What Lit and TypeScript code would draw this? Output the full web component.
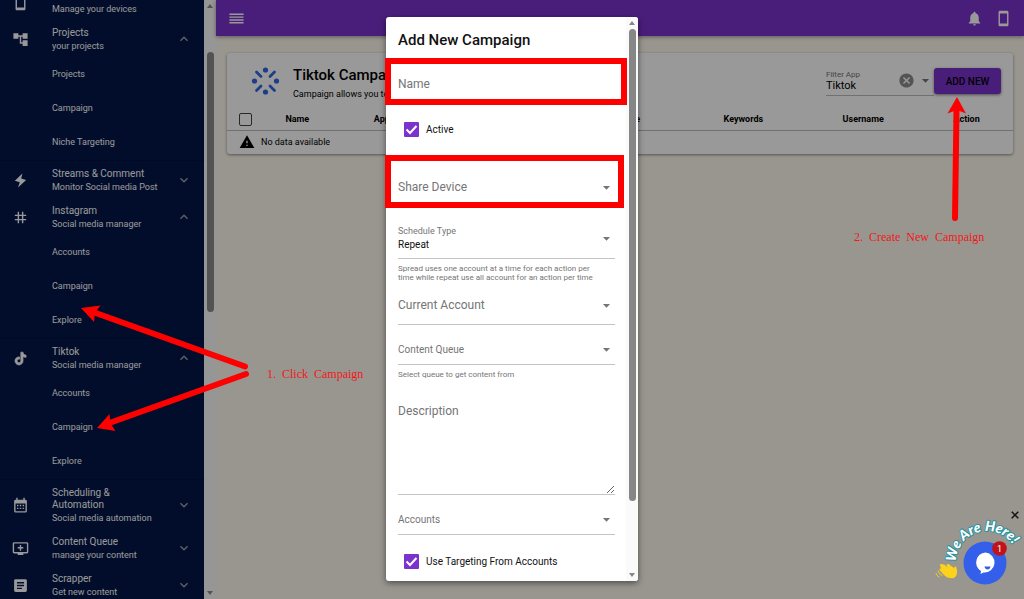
import { LitElement, html, css, svg, nothing } from "lit";
import { customElement, property } from "lit/decorators.js";

const ICONS: Record<string, unknown> = {
  phone: svg`<path d="M17 1.01 7 1c-1.100 0-2 .9-2 2v18c0 1.100.9 2 2 2h10c1.100 0 2-.9 2-2V3c0-1.100-.9-1.990-2-1.990zM17 19H7V5h10v14z"/>`,
  tree: svg`<path d="M22 11V3h-7v3H9V3H2v8h7V8h2v10h4v3h7v-8h-7v3h-2V8h2v3z"/>`,
  bolt: svg`<path d="M14.700 2 4 12.500l7 2L8.500 22 20 11.300l-7-2z"/>`,
  tag: svg`<path d="M20 10V8h-4V4h-2v4h-4V4H8v4H4v2h4v4H4v2h4v4h2v-4h4v4h2v-4h4v-2h-4v-4h4zm-6 4h-4v-4h4v4z"/>`,
  tiktok: svg`<path d="M16.600 5.820A4.280 4.280 0 0 1 15.540 3h-3.090v12.400a2.590 2.590 0 1 1-1.860-2.480V9.770A5.670 5.670 0 1 0 15.540 15.400V9.010a7.300 7.300 0 0 0 4.300 1.380V7.300a4.300 4.300 0 0 1-3.240-1.480z" stroke="currentColor"/>`,
  calendar: svg`<path fill-rule="evenodd" d="M6 1h2v3h8V1h2v3h1a2 2 0 0 1 2 2v14a2 2 0 0 1-2 2H5a2 2 0 0 1-2-2V6a2 2 0 0 1 2-2h1zM5 9v11h14V9zM7 11h2v2H7zm4 0h2v2h-2zm4 0h2v2h-2zm-8 4h2v2H7zm4 0h2v2h-2zm4 0h2v2h-2z"/>`,
  queue: svg`<path d="M21 3H3c-1.110 0-2 .89-2 2v12c0 1.100.89 2 2 2h5v2h8v-2h5c1.100 0 2-.9 2-2V5c0-1.110-.9-2-2-2zm0 14H3V5h18v12zm-5-7v2h-3v3h-2v-3H8v-2h3V7h2v3h3z"/>`,
  article: svg`<path d="M19 3H5c-1.100 0-2 .9-2 2v14c0 1.100.9 2 2 2h14c1.100 0 2-.9 2-2V5c0-1.100-.9-2-2-2zm-5 14H7v-2h7v2zm3-4H7v-2h10v2zm0-4H7V7h10v2z"/>`,
  up: svg`<path d="M12 8l-6 6 1.410 1.410L12 10.830l4.590 4.580L18 14z"/>`,
  down: svg`<path d="M16.590 8.590 12 13.170 7.410 8.590 6 10l6 6 6-6z"/>`,
  menu: svg`<path d="M2 19h20v-2H2v2zm0-4h20v-2H2v2zm0-4h20V9H2v2zm0-6v2h20V5H2z"/>`,
  bell: svg`<path d="M12 22c1.100 0 2-.9 2-2h-4c0 1.100.89 2 2 2zm6-6v-5c0-3.070-1.640-5.640-4.500-6.320V4c0-.83-.67-1.500-1.500-1.500s-1.500.67-1.500 1.500v.68C7.630 5.360 6 7.920 6 11v5l-2 2v1h16v-1l-2-2z"/>`,
  warning: svg`<path d="M1 21h22L12 2 1 21zm12-3h-2v-2h2v2zm0-4h-2v-4h2v4z"/>`,
  cancel: svg`<path d="M12 2C6.470 2 2 6.470 2 12s4.470 10 10 10 10-4.470 10-10S17.530 2 12 2zm5 13.590L15.590 17 12 13.410 8.410 17 7 15.590 10.590 12 7 8.410 8.410 7 12 10.590 15.590 7 17 8.410 13.410 12 17 15.590z"/>`,
  caret: svg`<path d="M7 10l5 5 5-5z"/>`,
  close: svg`<path d="M19 6.410 17.590 5 12 10.590 6.410 5 5 6.410 10.590 12 5 17.590 6.410 19 12 13.410 17.590 19 19 17.590 13.410 12z" stroke="currentColor"/>`,
};

const icon = (name: string, size: number) =>
  html`<svg class="icon" width=${size} height=${size} viewBox="0 0 24 24" aria-hidden="true">${ICONS[name]}</svg>`;

const shared = css`
  * { box-sizing: border-box; }
  .icon { display: block; flex: none; fill: currentColor; }
  button { font: inherit; color: inherit; background: none; border: 0; padding: 0; cursor: pointer; }
`;

@customElement("scroll-track")
class ScrollTrack extends LitElement {
  static styles = css`
    :host { display: flex; flex-direction: column; align-items: center; width: 12px; flex: none; background: var(--track); color: var(--thumb); padding: 4px 0; }
    .rail { flex: 1; width: 7px; display: flex; flex-direction: column; margin: 4px 0 2px; }
    .thumb { background: currentColor; border-radius: 4px; }
    svg { display: block; fill: currentColor; flex: none; }
  `;
  @property({ type: Number }) start = 0;
  @property({ type: Number }) size = 50;
  render() {
    return html`
      <svg width="6" height="4" viewBox="0 0 6 4"><path d="M0 4 3 0l3 4z"/></svg>
      <div class="rail">
        <div style="height:${this.start}%"></div>
        <div class="thumb" style="height:${this.size}%"></div>
      </div>
      <svg width="6" height="4" viewBox="0 0 6 4"><path d="M0 0h6L3 4z"/></svg>`;
  }
}

interface Group { icon: string; title: string; sub: string; items?: string[]; leaf?: boolean; }

const GROUPS: Group[] = [
  { icon: "phone", title: "", sub: "Manage your devices", leaf: true },
  { icon: "tree", title: "Projects", sub: "your projects", items: ["Projects", "Campaign", "Niche Targeting"] },
  { icon: "bolt", title: "Streams & Comment", sub: "Monitor Social media Post" },
  { icon: "tag", title: "Instagram", sub: "Social media manager", items: ["Accounts", "Campaign", "Explore"] },
  { icon: "tiktok", title: "Tiktok", sub: "Social media manager", items: ["Accounts", "Campaign", "Explore"] },
  { icon: "calendar", title: "Scheduling & Automation", sub: "Social media automation" },
  { icon: "queue", title: "Content Queue", sub: "manage your content" },
  { icon: "article", title: "Scrapper", sub: "Get new content" },
];

@customElement("side-menu")
class SideMenu extends LitElement {
  static styles = [shared, css`
    :host { display: flex; width: 216px; flex: none; overflow: hidden; --track: #fafafa; --thumb: #8b8b8b; }
    nav { flex: 1; min-width: 0; overflow: hidden; background: #021648; color: #fff; }
    .list { margin-top: -17px; }
    .group { display: grid; grid-template-columns: 40px 1fr 16px; column-gap: 12px; align-items: center; width: 100%; min-height: 37px; padding: 7px 12px 6px 0; text-align: left; }
    .lead { display: flex; justify-content: center; }
    .text { display: grid; row-gap: 2px; }
    .title { font-size: 10px; line-height: 12px; min-height: 12px; padding-right: 16px; }
    .sub { font-size: 9px; line-height: 10px; white-space: nowrap; }
    .section { border-bottom: 1px solid #02123c; padding-bottom: 1px; }
    .section a { display: flex; align-items: center; height: 34px; padding-left: 52px; font-size: 9px; color: inherit; text-decoration: none; }
    .chev { opacity: 0.6; }
  `];
  render() {
    return html`<nav aria-label="Main"><div class="list">
      ${GROUPS.map((g) => html`
        <button class="group" aria-expanded=${g.items ? "true" : "false"}>
          <span class="lead">${icon(g.icon, 17)}</span>
          <span class="text"><span class="title">${g.title}</span><span class="sub">${g.sub}</span></span>
          ${g.leaf ? nothing : html`<span class="chev">${icon(g.items ? "up" : "down", 16)}</span>`}
        </button>
        ${g.items ? html`<div class="section">${g.items.map((i) => html`<a href="#">${i}</a>`)}</div>` : nothing}`)}
    </div></nav>
    <scroll-track .start=${7} .size=${45}></scroll-track>`;
  }
}

const COLUMNS = [
  { name: "Name", width: 8.7 }, { name: "App", width: 12.8 }, { name: "", width: 18.8 }, { name: "Type", width: 12.8 },
  { name: "Keywords", width: 16 }, { name: "Username", width: 14.5 }, { name: "Action", width: 11.8 },
];

@customElement("campaign-page")
class CampaignPage extends LitElement {
  static styles = [shared, css`
    :host { flex: 1; min-width: 0; display: flex; flex-direction: column; background: #fffaf0; color: #000; }
    .bar { display: flex; align-items: center; gap: 12px; height: 36px; padding: 0 12px; background: #7b33cd; color: #fff; box-shadow: 0 1px 4px rgba(0,0,0,.4); }
    .spacer { flex: 1; }
    .card { margin: 17px 11px; background: #fff; border-radius: 3px; box-shadow: 0 1px 3px rgba(0,0,0,.45); }
    .head { display: flex; align-items: center; height: 56px; padding: 0 12px 0 24px; }
    .titles { margin-left: 13px; padding-top: 4px; flex: 1; min-width: 0; display: grid; row-gap: 4px; white-space: nowrap; overflow: hidden; }
    h1 { margin: 0; font-size: 15px; line-height: 18px; font-weight: 500; }
    p { margin: 0; font-size: 9px; line-height: 12px; }
    .filter { display: flex; align-items: center; gap: 2px; width: 108px; height: 30px; border-bottom: 1px solid #bbb; color: #757575; }
    .filter button { color: #8c8c8c; }
    .pair { flex: 1; display: grid; row-gap: 1px; }
    label { font-size: 8px; line-height: 9px; }
    .pair select { appearance: none; border: 0; background: none; padding: 0; font: inherit; font-size: 11px; line-height: 12px; height: 12px; color: #000; }
    .add { height: 26px; width: 67px; border-radius: 3px; background: #7b33cd; color: #000; font-size: 10px; font-weight: 500; box-shadow: 0 1px 3px rgba(0,0,0,.5); }
    table { width: 100%; table-layout: fixed; border-collapse: collapse; font-size: 9px; }
    th { height: 21px; padding: 0; font-weight: 700; text-align: center; border-bottom: 1px solid #bbb; }
    th:first-child { text-align: left; padding-left: 12px; }
    th input { display: block; appearance: none; width: 13px; height: 13px; margin: 0; border: 1px solid #444; border-radius: 2px; }
    td { height: 24px; padding: 0 0 0 12px; }
    .empty { display: flex; align-items: center; gap: 6px; }
  `];
  render() {
    return html`
      <header class="bar">
        <button aria-label="Menu">${icon("menu", 17)}</button><span class="spacer"></span>
        <button aria-label="Notifications">${icon("bell", 17)}</button>
        <button aria-label="Devices">${icon("phone", 17)}</button>
      </header>
      <section class="card">
        <div class="head">
          <svg width="29" height="28" viewBox="0 0 29 28" fill="#3166e8" stroke="#3166e8" stroke-linecap="round">
            <g stroke="none"><circle cx="14.500" cy="3" r="2.600"/><circle cx="14.500" cy="25" r="2.600"/><circle cx="3.500" cy="14" r="2.600"/><circle cx="25.500" cy="14" r="2.600"/></g>
            <path stroke-width="2.800" d="M5.500 5l4.500 4.500M23.500 5l-4.500 4.500M5.500 23.500l4.500-4.500M23.500 23.500l-4.500-4.500"/>
          </svg>
          <div class="titles"><h1>Tiktok Campaign</h1><p>Campaign allows you to</p></div>
          <div class="filter">
            <div class="pair"><label for="app">Filter App</label><select id="app"><option>Tiktok</option></select></div>
            <button aria-label="Clear filter">${icon("cancel", 17)}</button>${icon("caret", 17)}
          </div>
          <button class="add">ADD NEW</button>
        </div>
        <table>
          <colgroup><col style="width:4.6%">${COLUMNS.map((c) => html`<col style="width:${c.width}%">`)}</colgroup>
          <thead><tr><th><input type="checkbox" aria-label="Select all"></th>${COLUMNS.map((c) => html`<th>${c.name}</th>`)}</tr></thead>
          <tbody><tr><td colspan="8"><div class="empty">${icon("warning", 16)}<span>No data available</span></div></td></tr></tbody>
        </table>
      </section>`;
  }
}

@customElement("campaign-dialog")
class CampaignDialog extends LitElement {
  static styles = [shared, css`
    :host { display: flex; width: 252px; max-height: 100%; overflow: hidden; border-radius: 3px; background: #fff; color: #111; box-shadow: 0 2px 6px rgba(0,0,0,.5); --track: #fafafa; --thumb: #868686; }
    form { flex: 1; min-width: 0; overflow: hidden; padding: 0 11px 0 12px; }
    h2 { margin: 0; padding: 14px 0 10px; font-size: 15px; line-height: 18px; font-weight: 500; }
    .field { display: grid; align-items: center; height: 46px; border-bottom: 1px solid #c4c4c4; color: #757575; font-size: 10px; }
    .field > * { grid-area: 1 / 1; min-width: 0; }
    .field > .icon { justify-self: end; pointer-events: none; }
    .field input, .field select, textarea { appearance: none; width: 100%; height: 100%; border: 0; outline: 0; padding: 0; background: none; font: inherit; color: #111; }
    .large { font-size: 12px; }
    .name { padding-top: 4px; }
    .share { height: 51px; padding-top: 16px; }
    .schedule { height: 39px; margin-top: 15px; padding-bottom: 2px; }
    .schedule label { align-self: start; font-size: 9px; line-height: 12px; padding-top: 5px; }
    .schedule select { align-self: end; height: 12px; line-height: 12px; margin-bottom: 5px; }
    .current { height: 39px; margin-top: 4px; }
    .queue, .accounts { height: 30px; margin-top: 10px; }
    .hint { margin: 5px 0 0; font-size: 8px; line-height: 9px; color: #757575; }
    .check { display: flex; align-items: center; gap: 7px; height: 49px; padding-left: 6px; font-size: 10px; }
    .check.last { height: 52px; }
    .check input { appearance: none; width: 15px; height: 15px; margin: 0; border-radius: 1px; background: #7b33cd; }
    .tick { display: grid; }
    .tick > * { grid-area: 1 / 1; }
    .tick svg { pointer-events: none; fill: none; stroke: #fff; stroke-width: 2; }
    .area { height: 91px; margin-top: 25px; align-items: start; }
    .area label { line-height: 14px; }
    textarea { resize: vertical; }
  `];
  private check(id: string, text: string, cls = "") {
    return html`<div class="check ${cls}"><span class="tick"><input type="checkbox" id=${id} checked>
      <svg width="15" height="15" viewBox="0 0 15 15"><path d="M2.500 7.500l3.500 3.500 6.500-7"/></svg></span><label for=${id}>${text}</label></div>`;
  }
  private pick(id: string, text: string, cls: string, value = "") {
    return html`<div class="field ${cls}"><label for=${id}>${text}</label>
      <select id=${id}><option>${value}</option></select>${icon("caret", 17)}</div>`;
  }
  render() {
    return html`<form aria-label="Add New Campaign">
      <h2>Add New Campaign</h2>
      <div class="field large name"><label for="name">Name</label><input id="name"></div>
      ${this.check("active", "Active")}
      ${this.pick("share", "Share Device", "large share")}
      ${this.pick("schedule", "Schedule Type", "schedule", "Repeat")}
      <p class="hint">Spread uses one account at a time for each action per<br>time while repeat use all account for an action per time</p>
      ${this.pick("current", "Current Account", "large current")}
      ${this.pick("queue", "Content Queue", "queue")}
      <p class="hint">Select queue to get content from</p>
      <div class="field large area"><label for="desc">Description</label><textarea id="desc"></textarea></div>
      ${this.pick("accounts", "Accounts", "accounts")}
      ${this.check("targeting", "Use Targeting From Accounts", "last")}
    </form>
    <scroll-track .start=${0} .size=${87}></scroll-track>`;
  }
}

@customElement("chat-bubble")
class ChatBubble extends LitElement {
  static styles = [shared, css`
    :host { position: absolute; right: 0; bottom: 0; width: 100px; height: 99px; }
    svg { display: block; overflow: visible; }
    .call { font: italic 900 14px Lato, sans-serif; fill: #fff; stroke: #25929f; stroke-width: 2px; paint-order: stroke; stroke-linejoin: round; }
    .count { font-size: 9px; fill: #fff; text-anchor: middle; }
    .close { position: absolute; right: 3px; top: 9px; color: #111; }
  `];
  render() {
    return html`<button class="close" aria-label="Close">${icon("close", 12)}</button>
      <svg width="100" height="99" viewBox="0 0 100 99">
        <path id="arc" fill="none" d="M32 62A31 31 0 0 1 94 62"/>
        <text class="call"><textPath href="#arc">We Are Here!</textPath></text>
        <circle cx="61" cy="63" r="21.500" fill="#335fea"/>
        <path fill="#fff" d="M61.500 52.500a10 10 0 1 1-2 20l-3 1.500.5-3a10 10 0 0 1 4.500-18.500z"/>
        <path fill="#335fea" d="M60.500 66.500h6q-.5 3-3 3t-3-3z"/>
        <circle cx="75.500" cy="48.500" r="7.300" fill="#c01218"/>
        <text class="count" x="75.500" y="51.500">1</text>
        <path fill="#fcd21c" d="M16.500 66.500q-1.500-2 .5-2.500l3 .5 4 3-1.500-2q0-2 2-1.500l5.500 4q.5-2 2-1.500 1.500 3 1 7-1.500 6-7 4.500-3 0-6.500-3.500l-4-4.500q-.5-2 1.500-1.500z"/>
        <path fill="none" stroke="#fcd21c" stroke-width="1" stroke-linecap="round" d="M14 71q1 3 4 4.500M12 73.500q1 2.500 3 3.500"/>
      </svg>`;
  }
}

@customElement("app-root")
class AppRoot extends LitElement {
  static styles = [shared, css`
    :host { position: relative; display: flex; height: 100vh; overflow: hidden; font-family: Roboto, sans-serif; }
    .backdrop { position: absolute; inset: 0; display: flex; align-items: center; justify-content: center; padding: 17px 0 18px; background: rgba(0,0,0,.4); }
    .marks { position: absolute; left: 0; top: 0; pointer-events: none; }
    .marks text { font: 12px "Liberation Serif", serif; fill: #f01818; white-space: pre; }
    .shaft { stroke: #f00; stroke-width: 6; stroke-linecap: round; }
    .box { fill: none; stroke: #f00; stroke-width: 6; }
  `];
  render() {
    return html`
      <side-menu></side-menu>
      <campaign-page></campaign-page>
      <div class="backdrop"><campaign-dialog role="dialog" aria-label="Add New Campaign"></campaign-dialog></div>
      <chat-bubble></chat-bubble>
      <svg class="marks" width="1024" height="599" viewBox="0 0 1024 599">
        <rect class="box" x="388" y="61" width="236" height="41"/>
        <rect class="box" x="388" y="158" width="233" height="47"/>
        <path class="shaft" d="M245 366.500 93 312M246 374 108 423.500M955 218l1.500-108"/>
        <path fill="#f00" d="M81 308l19.500-2.500L95 312.500 94 322zM97 428l12.500-14 1 9.500 5 7.500zM957 97l9 16.500-9-3.500-9.500 3.500z"/>
        <text x="267" y="378">1.  Click  Campaign</text>
        <text x="854" y="241">2.  Create  New  Campaign</text>
      </svg>`;
  }
}
